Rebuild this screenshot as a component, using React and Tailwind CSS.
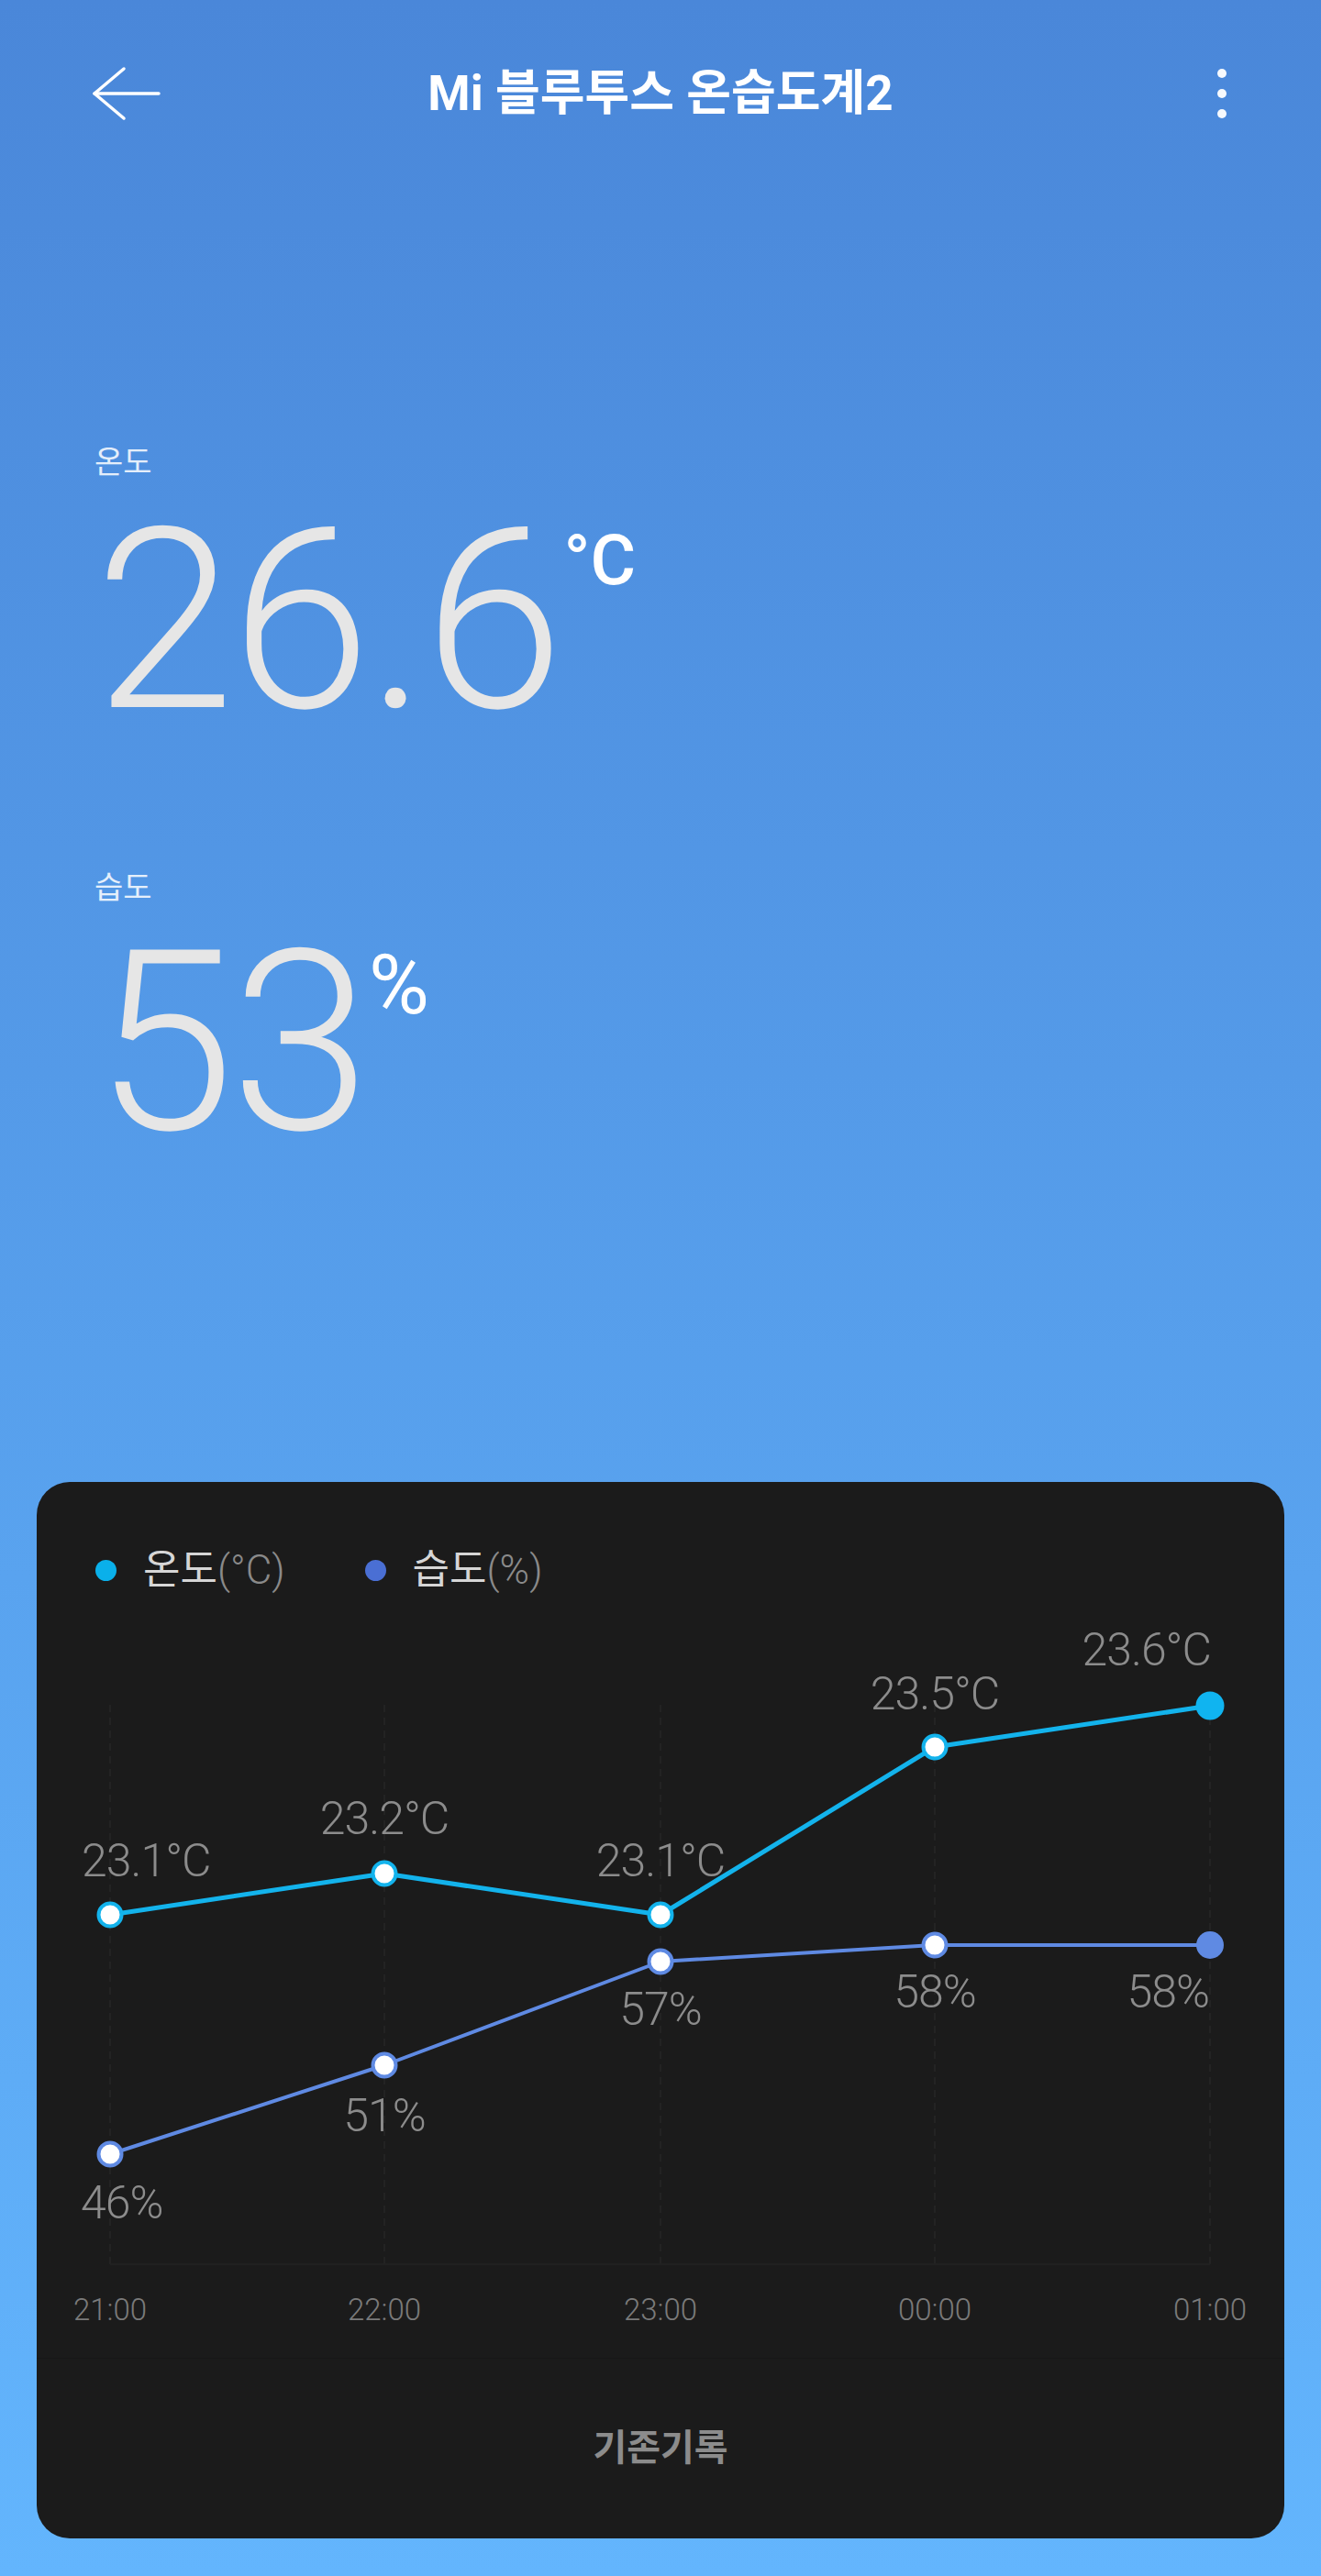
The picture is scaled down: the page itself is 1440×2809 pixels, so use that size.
import React from 'react';

const FONT = { fontFamily: 'Roboto, "Noto Sans CJK KR", sans-serif' };

const temps = [
    { x: 80, y: 340, label: '23.1°C', lx: 49, ly: 298, anchor: 'start' },
    { x: 379, y: 295, label: '23.2°C', lx: 379, ly: 252, anchor: 'middle' },
    { x: 680, y: 340, label: '23.1°C', lx: 680, ly: 298, anchor: 'middle' },
    { x: 979, y: 157, label: '23.5°C', lx: 979, ly: 116, anchor: 'middle' },
    { x: 1279, y: 112, label: '23.6°C', lx: 1280, ly: 68, anchor: 'end' },
];

const hums = [
    { x: 80, y: 601, label: '46%', lx: 48, ly: 671, anchor: 'start' },
    { x: 379, y: 504, label: '51%', lx: 379, ly: 576, anchor: 'middle' },
    { x: 680, y: 391, label: '57%', lx: 680, ly: 460, anchor: 'middle' },
    { x: 979, y: 373, label: '58%', lx: 979, ly: 441, anchor: 'middle' },
    { x: 1279, y: 373, label: '58%', lx: 1278, ly: 441, anchor: 'end' },
];

const hours = ['21:00', '22:00', '23:00', '00:00', '01:00'];
const gridX = [80, 379, 680, 979, 1279];

const Chart = () => (
    <svg width="1360" height="823" viewBox="0 0 1360 823" className="block">
        {/* grid */}
        {gridX.map((x) => (
            <line key={x} x1={x} y1="111" x2={x} y2="721" stroke="#232323" strokeWidth="2" strokeDasharray="8 6" />
        ))}
        <line x1="80" y1="721" x2="1279" y2="721" stroke="#212121" strokeWidth="2" />

        {/* humidity */}
        <polyline
            points={hums.map((p) => `${p.x},${p.y}`).join(' ')}
            fill="none"
            stroke="#5f8ae3"
            strokeWidth="4"
            strokeLinejoin="round"
        />
        {hums.map((p, i) =>
            i === hums.length - 1 ? (
                <circle key={i} cx={p.x} cy={p.y} r="15" fill="#5f8ae3" />
            ) : (
                <circle key={i} cx={p.x} cy={p.y} r="12.5" fill="#ffffff" stroke="#5f8ae3" strokeWidth="4" />
            )
        )}

        {/* temperature */}
        <polyline
            points={temps.map((p) => `${p.x},${p.y}`).join(' ')}
            fill="none"
            stroke="#13b3ec"
            strokeWidth="5"
            strokeLinejoin="round"
        />
        {temps.map((p, i) =>
            i === temps.length - 1 ? (
                <circle key={i} cx={p.x} cy={p.y} r="15.5" fill="#10b4f0" />
            ) : (
                <circle key={i} cx={p.x} cy={p.y} r="12.5" fill="#ffffff" stroke="#13b3ec" strokeWidth="4" />
            )
        )}

        <g fill="#8c8c8c" fontFamily="Roboto, sans-serif" fontWeight="300" fontSize="50" letterSpacing="-1">
            {temps.map((p, i) => (
                <text key={'t' + i} x={p.lx} y={p.ly} textAnchor={p.anchor}>
                    {p.label}
                </text>
            ))}
            {hums.map((p, i) => (
                <text key={'h' + i} x={p.lx} y={p.ly} textAnchor={p.anchor}>
                    {p.label}
                </text>
            ))}
        </g>

        <g fill="#7a7a7a" fontFamily="Roboto, sans-serif" fontWeight="300" fontSize="33">
            {hours.map((h, i) => (
                <text key={h} x={gridX[i]} y="782" textAnchor="middle">
                    {h}
                </text>
            ))}
        </g>
    </svg>
);

export default function App() {
    return (
        <div
            className="w-[1440px] h-[2809px] flex flex-col bg-gradient-to-b from-[#4a87d9] to-[#63b5fd] overflow-hidden"
            style={FONT}
        >
            {/* header */}
            <div className="h-[204px] grid grid-cols-[1fr_auto_1fr] items-center px-[100px]">
                <button className="justify-self-start">
                    <svg width="76" height="60" viewBox="0 0 76 60" fill="none" stroke="#ffffff" strokeWidth="3.5" strokeLinecap="round" strokeLinejoin="round">
                        <path d="M3 30 H73" />
                        <path d="M35 3 L3 30 L35 57" />
                    </svg>
                </button>
                <h1 className="text-[53px] font-bold text-white leading-none">Mi 블루투스 온습도계2</h1>
                <div className="justify-self-end flex flex-col gap-[12px] mr-[3px]">
                    <span className="size-[10px] rounded-full bg-white/95" />
                    <span className="size-[10px] rounded-full bg-white/95" />
                    <span className="size-[10px] rounded-full bg-white/95" />
                </div>
            </div>

            {/* readings */}
            <div className="pl-[103px] pt-[280px] flex flex-col">
                <div className="text-[34px] leading-[40px] text-white/85">온도</div>
                <div className="flex items-start mt-[16px]">
                    <span className="text-[275px] leading-none font-light text-[#e6e6e6] tracking-[-4px]">26.6</span>
                    <span className="text-[76px] leading-none font-medium text-white mt-[33px] ml-[4px]">°C</span>
                </div>

                <div className="text-[34px] leading-[40px] text-white/85 mt-[133px]">습도</div>
                <div className="flex items-start mt-[12px]">
                    <span className="text-[275px] leading-none font-light text-[#e6e6e6] tracking-[-4px]">53</span>
                    <span className="text-[90px] leading-none text-white mt-[30px] ml-[2px]">%</span>
                </div>
            </div>

            <div className="flex-1" />

            {/* chart card */}
            <div className="mx-[40px] mb-[41px] rounded-[36px] bg-[#1b1b1b] flex flex-col overflow-hidden">
                <div className="pt-[60px] h-[132px] flex items-center pl-[64px]">
                    <div className="flex items-center gap-[29px] h-[72px]">
                        <span className="size-[23px] rounded-full bg-[#0ab0ea]" />
                        <span className="text-[44px] leading-none">
                            <span className="text-[#d6d6d6]">온도</span>
                            <span className="text-[#8a8a8a] font-light">(°C)</span>
                        </span>
                    </div>
                    <div className="flex items-center gap-[29px] h-[72px] ml-[87px]">
                        <span className="size-[23px] rounded-full bg-[#4a6fd4]" />
                        <span className="text-[44px] leading-none">
                            <span className="text-[#d6d6d6]">습도</span>
                            <span className="text-[#8a8a8a] font-light">(%)</span>
                        </span>
                    </div>
                </div>

                <Chart />

                <div className="border-t border-[#171717] h-[197px] flex items-center justify-center">
                    <span className="text-[40px] font-bold text-[#8c8c8c] leading-none">기존기록</span>
                </div>
            </div>
        </div>
    );
}
